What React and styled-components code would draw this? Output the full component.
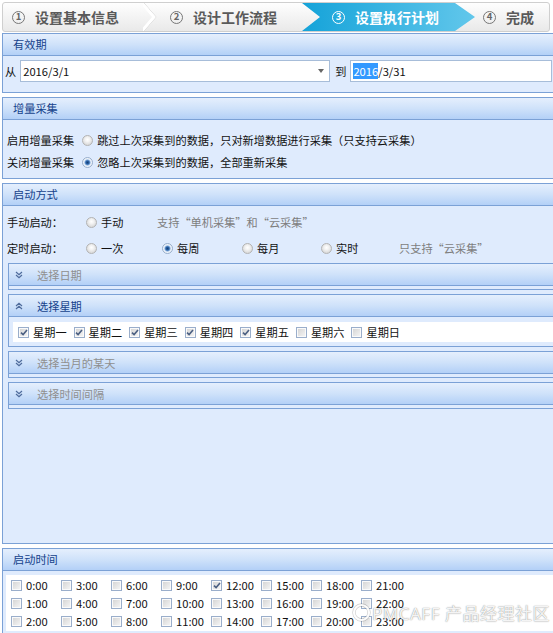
import React from "react";
import styled, { createGlobalStyle, css } from "styled-components";

const FONT = `"Noto Sans CJK SC", "Noto Sans", sans-serif`;

const GlobalStyle = createGlobalStyle`
  html, body { margin: 0; padding: 0; background: #fff; overflow: hidden; }
  body { font-family: ${FONT}; font-size: 11.2px; color: #111; }
  * { box-sizing: border-box; }
`;

const Page = styled.div`
  position: relative;
  width: 572px;
  height: 633px;
  padding: 2px 0 0 2px;
  overflow: hidden;
`;

/* ---------- wizard ---------- */
const Wizard = styled.div`
  display: flex;
  width: 548px;
  height: 30px;
  margin-bottom: 1px;
  border: 1px solid #cfcfcf;
  border-radius: 3px;
  background: linear-gradient(#fefefe, #e9e9e9);
  overflow: hidden;
`;

const Step = styled.div`
  display: flex;
  align-items: center;
  flex: ${(p) => (p.$w ? `0 0 ${p.$w}px` : "1 1 auto")};
  padding-left: ${(p) => p.$pl}px;
  font-size: 14px;
  font-weight: bold;
  white-space: nowrap;
  color: ${(p) => (p.$active ? "#fff" : "#5a5a5a")};
  ${(p) =>
    p.$active &&
    css`
      background: linear-gradient(to right, #15a3d9, #62c7eb);
      clip-path: polygon(
        0 0,
        calc(100% - 20px) 0,
        100% 50%,
        calc(100% - 20px) 100%,
        0 100%,
        18px 50%
      );
    `}
`;

const StepNum = styled.span`
  display: inline-flex;
  align-items: center;
  justify-content: center;
  width: 13px;
  height: 13px;
  border-radius: 50%;
  border: 1.4px solid ${(p) => (p.$active ? "#fff" : "#777")};
  color: ${(p) => (p.$active ? "#fff" : "#666")};
  font-size: 9.5px;
  line-height: 1;
  margin-right: 10px;
`;

const StepSep = styled.svg`
  flex: 0 0 16px;
  height: 28px;
`;

/* ---------- panels ---------- */
const Panel = styled.section`
  width: 566px;
  border: 1px solid #7ba1d6;
  background: #dfebfd;
  margin-bottom: 4px;
`;

const headerBg = css`
  background: linear-gradient(#e5effd, #cfe2fa 50%, #b3d0f7);
`;

const PanelHeader = styled.div`
  height: 22px;
  line-height: 21px;
  padding-left: 10px;
  border-bottom: 1px solid #7ba1d6;
  color: #15428b;
  ${headerBg}
`;

const PanelBody = styled.div`
  height: ${(p) => (p.$h ? `${p.$h}px` : "auto")};
  padding: ${(p) => p.$pad};
`;

const FieldRow = styled.div`
  display: flex;
  align-items: center;
`;

const FieldLabel = styled.span`
  margin-right: ${(p) => p.$mr}px;
  color: #111;
`;

const InputBox = styled.div`
  display: flex;
  align-items: center;
  justify-content: space-between;
  width: ${(p) => p.$w}px;
  height: 22px;
  padding: 0 5px 0 2px;
  margin-right: ${(p) => p.$mr || 0}px;
  border: 1px solid #a7bdd9;
  background: #fff;
  color: #111;
`;

const Selected = styled.span`
  background: #3399ff;
  color: #fff;
`;

const DropArrow = styled.span`
  width: 0;
  height: 0;
  border-left: 3px solid transparent;
  border-right: 3px solid transparent;
  border-top: 4px solid #666;
`;

const OptRow = styled.div`
  display: flex;
  align-items: center;
  height: 22px;
  margin-bottom: ${(p) => p.$mb || 0}px;
`;

const RowLabel = styled.span`
  flex: none;
  width: ${(p) => (p.$w ? `${p.$w}px` : "auto")};
  margin-right: ${(p) => p.$mr || 0}px;
  color: #111;
`;

const Option = styled.span`
  display: flex;
  align-items: center;
  gap: 4px;
  flex: none;
  width: ${(p) => (p.$w ? `${p.$w}px` : "auto")};
  color: #111;
`;

const Hint = styled.span`
  color: #7e7e7e;
`;

const Radio = styled.span`
  flex: none;
  width: 11px;
  height: 11px;
  border-radius: 50%;
  border: 1px solid #b3b3b3;
  background: radial-gradient(circle at 50% 40%, #ffffff 0, #f4f4f4 2px, #dcdcdc 5px);
  ${(p) =>
    p.$checked &&
    css`
      border-color: #98aecb;
      background: radial-gradient(
        circle,
        #173f74 0,
        #2a62a6 1.6px,
        #7fa9da 2.6px,
        #e6eef8 3.4px,
        #f7f9fc 5px
      );
    `}
`;

const CheckBox = styled.span`
  flex: none;
  display: flex;
  align-items: center;
  justify-content: center;
  width: 11px;
  height: 11px;
  border: 1px solid #9aaecb;
  background: linear-gradient(135deg, #d2d2d2, #f7f7f7);
  box-shadow: inset 0 0 0 1px #fafafa;
`;

const CheckItem = styled.span`
  display: flex;
  align-items: center;
  gap: ${(p) => p.$gap}px;
  color: #111;
  white-space: nowrap;
`;

/* ---------- sub panels ---------- */
const SubPanel = styled.div`
  width: 560px;
  margin: 0 0 4px 1px;
  border: 1px solid #7ba1d6;
  background: #dfebfd;
`;

const SubHeader = styled.div`
  display: flex;
  align-items: center;
  height: 22px;
  padding-left: 6px;
  border-bottom: 1px solid #7ba1d6;
  color: ${(p) => (p.$open ? "#15428b" : "#8f8f8f")};
  ${headerBg}
`;

const Chevron = styled.svg`
  flex: none;
  width: 8px;
  height: 8px;
  margin-right: 14px;
`;

const SubBody = styled.div`
  padding: ${(p) => (p.$open ? "5px 0 4px 4px" : "3px 0 0")};
`;

const WeekRow = styled.div`
  display: flex;
  align-items: center;
  gap: 7px;
  height: 20px;
  padding-left: 5px;
  background: #fff;
`;

const TimeGrid = styled.div`
  display: grid;
  grid-template-rows: repeat(3, 18px);
  grid-auto-flow: column;
  grid-auto-columns: 50px;
  align-items: center;
  padding: 1px 0 1px 5px;
  background: #fff;
`;

/* ---------- watermark ---------- */
const Watermark = styled.div`
  position: absolute;
  left: 352px;
  top: 600px;
  display: flex;
  align-items: center;
  gap: 1px;
  font-family: "Noto Sans", "Noto Sans CJK SC", sans-serif;
  font-size: 17px;
  letter-spacing: 0.5px;
  color: rgba(255, 255, 255, 0.92);
  text-shadow: 0 0 1px rgba(0, 0, 0, 0.45), 0 0 2px rgba(0, 0, 0, 0.15);
  pointer-events: none;
  white-space: nowrap;
`;

const Tick = () => (
  <svg width="8" height="7" viewBox="0 0 8 7">
    <path d="M1 3.6 L3.1 5.6 L7 1" fill="none" stroke="#4b5f82" strokeWidth="1.6" />
  </svg>
);

const Check = ({ checked, children, gap = 4 }) => (
  <CheckItem $gap={gap}>
    <CheckBox>{checked && <Tick />}</CheckBox>
    {children}
  </CheckItem>
);

const ChevronIcon = ({ up }) => (
  <Chevron viewBox="0 0 8 8">
    <path
      d={up ? "M1 4 L4 1.2 L7 4 M1 7 L4 4.2 L7 7" : "M1 1 L4 3.8 L7 1 M1 4 L4 6.8 L7 4"}
      fill="none"
      stroke="#4f6c9c"
      strokeWidth="1.2"
    />
  </Chevron>
);

const Sub = ({ title, open, children }) => (
  <SubPanel>
    <SubHeader $open={open}>
      <ChevronIcon up={open} />
      {title}
    </SubHeader>
    <SubBody $open={open}>{children}</SubBody>
  </SubPanel>
);

const weekdays = [
  ["星期一", true],
  ["星期二", true],
  ["星期三", true],
  ["星期四", true],
  ["星期五", true],
  ["星期六", false],
  ["星期日", false],
];

const hours = Array.from({ length: 24 }, (_, i) => i);

export default function App() {
  return (
    <>
      <GlobalStyle />
      <Page>
        <Wizard>
          <Step $w={140} $pl={9}>
            <StepNum>1</StepNum>设置基本信息
          </Step>
          <StepSep viewBox="0 0 16 28">
            <polyline points="0,-1 13,14 0,29" fill="none" stroke="#d2d2d2" strokeWidth="1" />
            <polyline points="-2,-1 11,14 -2,29" fill="none" stroke="#ffffff" strokeWidth="3" />
          </StepSep>
          <Step $w={143} $pl={11}>
            <StepNum>2</StepNum>设计工作流程
          </Step>
          <Step $w={173} $pl={30} $active>
            <StepNum $active>3</StepNum>设置执行计划
          </Step>
          <Step $pl={8}>
            <StepNum>4</StepNum>完成
          </Step>
        </Wizard>

        <Panel>
          <PanelHeader>有效期</PanelHeader>
          <PanelBody $h={36} $pad="4px 0 0 2px">
            <FieldRow>
              <FieldLabel $mr={4}>从</FieldLabel>
              <InputBox $w={310} $mr={5}>
                <span>2016/3/1</span>
                <DropArrow />
              </InputBox>
              <FieldLabel $mr={4}>到</FieldLabel>
              <InputBox $w={202}>
                <span>
                  <Selected>2016</Selected>/3/31
                </span>
              </InputBox>
            </FieldRow>
          </PanelBody>
        </Panel>

        <Panel>
          <PanelHeader>增量采集</PanelHeader>
          <PanelBody $h={58} $pad="9px 0 0 4px">
            <OptRow>
              <RowLabel $mr={8}>启用增量采集</RowLabel>
              <Option>
                <Radio />
                跳过上次采集到的数据，只对新增数据进行采集（只支持云采集）
              </Option>
            </OptRow>
            <OptRow>
              <RowLabel $mr={8}>关闭增量采集</RowLabel>
              <Option>
                <Radio $checked />
                忽略上次采集到的数据，全部重新采集
              </Option>
            </OptRow>
          </PanelBody>
        </Panel>

        <Panel>
          <PanelHeader>启动方式</PanelHeader>
          <PanelBody $h={337} $pad="5px 0 0 4px">
            <OptRow $mb={4}>
              <RowLabel $w={79}>手动启动：</RowLabel>
              <Option $w={71}>
                <Radio />
                手动
              </Option>
              <Hint>支持“单机采集”和“云采集”</Hint>
            </OptRow>
            <OptRow $mb={4}>
              <RowLabel $w={79}>定时启动：</RowLabel>
              <Option $w={76}>
                <Radio />
                一次
              </Option>
              <Option $w={80}>
                <Radio $checked />
                每周
              </Option>
              <Option $w={79}>
                <Radio />
                每月
              </Option>
              <Option $w={78}>
                <Radio />
                实时
              </Option>
              <Hint>只支持“云采集”</Hint>
            </OptRow>
            <Sub title="选择日期" />
            <Sub title="选择星期" open>
              <WeekRow>
                {weekdays.map(([d, c]) => (
                  <Check key={d} checked={c}>
                    {d}
                  </Check>
                ))}
              </WeekRow>
            </Sub>
            <Sub title="选择当月的某天" />
            <Sub title="选择时间间隔" />
          </PanelBody>
        </Panel>

        <Panel>
          <PanelHeader>启动时间</PanelHeader>
          <PanelBody $h={80} $pad="4px 0 0 3px">
            <TimeGrid>
              {hours.map((h) => (
                <Check key={h} checked={h === 12}>
                  {h}:00
                </Check>
              ))}
            </TimeGrid>
          </PanelBody>
        </Panel>

        <Watermark>
          <svg width="19" height="19" viewBox="0 0 19 19">
            <circle cx="9.5" cy="9.5" r="7.5" fill="none" stroke="rgba(0,0,0,0.2)" strokeWidth="3.4" />
            <circle cx="9.5" cy="9.5" r="7.5" fill="none" stroke="rgba(255,255,255,0.95)" strokeWidth="2.2" />
          </svg>
          <span>PMCAFF 产品经理社区</span>
        </Watermark>
      </Page>
    </>
  );
}
